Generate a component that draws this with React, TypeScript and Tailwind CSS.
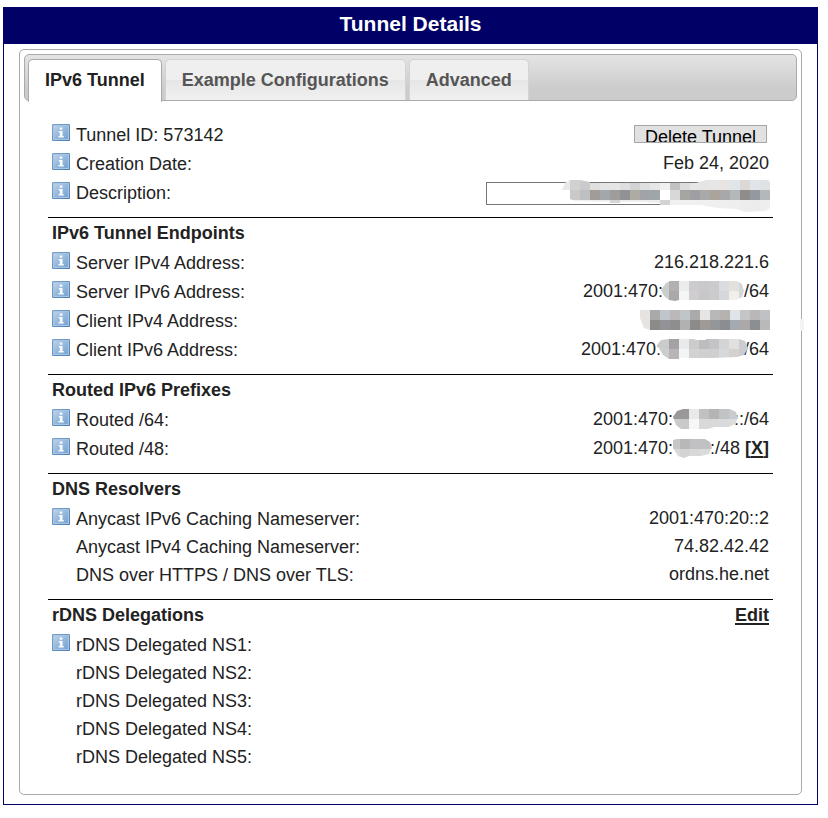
import { useId, type ReactNode } from "react";

type MosaicProps = {
  label: string;
  viewBox: string;
  outline: string;
  rows: { y: number; height: number; x: number; colors: string[] }[];
  className: string;
};

/* Pixelated patch that hides private parts of an address. */
function Mosaic({ label, viewBox, outline, rows, className }: MosaicProps) {
  const id = useId();
  return (
    <svg role="img" aria-label={label} viewBox={viewBox} shapeRendering="crispEdges" className={className}>
      <clipPath id={id}>
        <path d={outline} />
      </clipPath>
      <g clipPath={`url(#${id})`}>
        {rows.map((row) =>
          row.colors.map((color, i) => (
            <rect key={`${row.y}-${i}`} x={row.x + i * 10} y={row.y} width="10" height={row.height} fill={color} />
          )),
        )}
      </g>
    </svg>
  );
}

function InfoIcon() {
  return (
    <svg viewBox="0 0 18 17" className="mb-1 h-[17px] w-[18px] shrink-0" aria-hidden="true">
      <defs>
        <linearGradient id="info-fill" x1="0" y1="0" x2="1" y2="1">
          <stop offset="0" stopColor="#bcd2e8" />
          <stop offset="0.5" stopColor="#95b8dc" />
          <stop offset="1" stopColor="#78a3d1" />
        </linearGradient>
        <linearGradient id="info-edge" x1="0" y1="0" x2="1" y2="1">
          <stop offset="0" stopColor="#7ba5d0" />
          <stop offset="1" stopColor="#4a7db5" />
        </linearGradient>
      </defs>
      <rect width="18" height="17" rx="1" fill="url(#info-edge)" />
      <rect x="1" y="1" width="16" height="15" fill="#a9c5e2" />
      <rect x="2" y="2" width="14" height="13" fill="url(#info-fill)" />
      <path d="M7.8 3.6h2.6v2.2H7.8zM6.8 7h3.8v5h1.1v1.5H6.5V12h1.3V8.5h-1z" fill="#f6fafd" />
    </svg>
  );
}

function Row({ label, htmlFor, icon = true, children }: { label: string; htmlFor?: string; icon?: boolean; children?: ReactNode }) {
  return (
    <div className={icon ? "flex h-[29px] items-center px-1" : "flex h-7 items-center px-1 pl-7"}>
      {icon && <InfoIcon />}
      {htmlFor ? (
        <label htmlFor={htmlFor} className="ml-1.5">{label}</label>
      ) : (
        <span className={icon ? "ml-1.5" : ""}>{label}</span>
      )}
      <div className="ml-auto flex items-center pb-0.5">{children}</div>
    </div>
  );
}

function Heading({ children, action }: { children: ReactNode; action?: ReactNode }) {
  return (
    <div className="flex h-[30px] items-center justify-between px-1 font-bold">
      <h2>{children}</h2>
      {action}
    </div>
  );
}

const tabs = ["IPv6 Tunnel", "Example Configurations", "Advanced"];

export default function App() {
  return (
    <main className="pt-[7px] pr-[10px] pb-3 pl-[3px] font-['Liberation_Sans',Arial,sans-serif] text-[18px] leading-[22px] text-[#222222]">
      <div className="border border-[#000066] bg-white pb-[9px]">
        <h1 className="flex h-9 items-center justify-center bg-[#000066] pb-1 text-[21px] leading-6 font-bold text-white">
          Tunnel Details
        </h1>

        <div className="relative mx-[15px] mt-[5px] rounded-[5px] border border-[#aaaaaa] pb-[23px]">
          <span aria-hidden="true" className="absolute top-[269px] -right-[3px] h-3 w-1 rounded-sm bg-[#f3f3f3]" />
          <div
            role="tablist"
            className="mx-1 mt-1 flex h-[47px] gap-[3px] rounded-[5px] border border-[#aaaaaa] bg-linear-to-b from-[#e4e4e4] to-[#cccccc] to-75% pt-1 pl-[3px] font-bold"
          >
            {tabs.map((tab, i) => (
              <button
                key={tab}
                type="button"
                role="tab"
                aria-selected={i === 0}
                className={
                  i === 0
                    ? "-mb-0.5 rounded-t-[5px] border border-b-0 border-[#aaaaaa] bg-white px-4 pb-0.5 text-[#212121]"
                    : "rounded-t-[5px] border border-b-0 border-[#d3d3d3] bg-linear-to-b from-[#efefef] from-50% via-[#e6e6e6] via-50% to-[#f0f0f0] px-4 text-[#555555]"
                }
              >
                {tab}
              </button>
            ))}
          </div>

          <div className="px-7 pt-[19px]">
            <section className="border-b border-black pb-[10px]">
              <Row label="Tunnel ID: 573142">
                <button
                  type="button"
                  className="mr-0.5 h-[18px] w-[133px] overflow-hidden border border-[#a6a6a6] bg-[#e1e1e1] pt-0.5 leading-[18px] text-black"
                >
                  Delete Tunnel
                </button>
              </Row>
              <Row label="Creation Date:">Feb 24, 2020</Row>
              <Row label="Description:" htmlFor="description">
                <div className="relative mt-1">
                  <input id="description" type="text" className="block h-[23px] w-[283px] border border-[#767676] px-1" />
                  <Mosaic
                    label="Hidden description"
                    viewBox="562 180 209 32"
                    className="pointer-events-none absolute -top-0.5 -right-0.5 h-8 w-[209px]"
                    outline="M562 189L566 182L570 180H580L590 182V183H696L706 180L746 179L768 180L770 182V208L766 211L745 212L736 209L718 208L700 205H670V205H660V203H657L640 202H620V203H610V202L575 201L570 199V190H562Z"
                    rows={[
                      { y: 180, height: 10, x: 560, colors: ["#e9e9e9", "#d2d1cf", "#c8cacc", "#dfdfdf", "#e4e4e4", "#e5e5e5", "#dedede", "#d3d3d3", "#dfdfdf", "#e6e6e6", "#f0f0f0", "#c2c1c1", "#dcdcdc", "#e6e6e6", "#e5e5e5", "#e6e6e6", "#e8e4e1", "#e0e5ea", "#dcd8d4", "#e1e5e9", "#dfe1e3"] },
                      { y: 190, height: 10, x: 570, colors: ["#cac9c7", "#bdbfc1", "#a09d99", "#a1a7ab", "#9f9d99", "#929296", "#aeaaa4", "#a0a4a8", "#9fa6a9", "#ffffff", "#d8d8d8", "#a6a5a1", "#9d9fa2", "#a9a9a9", "#aaa49c", "#a8a8aa", "#b5b8ba", "#8e8d8b", "#94999f", "#b3b8bb"] },
                      { y: 200, height: 12, x: 570, colors: ["#f0f0f0", "#f0f0f0", "#eeeeee", "#eeeeee", "#d5d5d5", "#eeeeee", "#eeeeee", "#eeeeee", "#eeeeee", "#d3d3d3", "#f0f0f0", "#f0f0f0", "#f0f0f0", "#f0f0f0", "#efefef", "#efefef", "#eeeeee", "#ededed", "#ececec", "#eeeeee"] },
                    ]}
                  />
                </div>
              </Row>
            </section>

            <section className="border-b border-black pb-[10px]">
              <Heading>IPv6 Tunnel Endpoints</Heading>
              <Row label="Server IPv4 Address:">216.218.221.6</Row>
              <Row label="Server IPv6 Address:">
                <span>2001:470:</span>
                <Mosaic
                  label="hidden"
                  viewBox="662 280 83 20"
                  className="relative -ml-0.5 h-5 w-[83px]"
                  outline="M662 289L667 282L671 280H738L743 283L745 290L743 296L737 299H680L676 300L670 299L665 295Z"
                  rows={[
                    { y: 280, height: 10, x: 660, colors: ["#c9cdcc", "#b1b1b0", "#ebecec", "#cdcbcd", "#c9c8ca", "#cbcacc", "#dadce0", "#e4e0db", "#d3d8dc"] },
                    { y: 290, height: 10, x: 660, colors: ["#cbcecd", "#aaa8a8", "#f4f5f7", "#cfcdcf", "#c9c6ca", "#cdcacb", "#d6d7da", "#f2efe8", "#d3d8dc"] },
                  ]}
                />
                <span>/64</span>
              </Row>
              <Row label="Client IPv4 Address:">
                <Mosaic
                  label="Hidden address"
                  viewBox="640 310 130 20"
                  className="-mr-px h-5 w-[130px]"
                  outline="M640 310H770V330H650L644 328L640 318Z"
                  rows={[
                    { y: 310, height: 10, x: 640, colors: ["#e7e3e1", "#a9a9a9", "#bfc5cb", "#bab8b8", "#bfc5c9", "#aaaaaa", "#e6e5e4", "#b8b8b8", "#b4b3b0", "#dfe4e9", "#c5c5c5", "#b9b7b7", "#bec2c4"] },
                    { y: 320, height: 10, x: 640, colors: ["#e7e3e1", "#8b8a89", "#929397", "#8e8e8e", "#b0b1b3", "#8b8b8b", "#9f9a96", "#959698", "#8c8d90", "#a5a9b1", "#aca8a8", "#8a8f93", "#b9b9b9"] },
                  ]}
                />
              </Row>
              <Row label="Client IPv6 Address:">
                <span>2001:470:</span>
                <Mosaic
                  label="hidden"
                  viewBox="658 340 91 20"
                  className="relative -mr-1 -ml-1 h-5 w-[91px]"
                  outline="M658 346L662 341L670 340H694L698 341H706L708 340H740L746 342L749 349L745 356L738 358L714 359H680V360H670L664 356Z"
                  rows={[
                    { y: 340, height: 10, x: 650, colors: ["#c9cccb", "#c9cccb", "#a5a2a3", "#e9eaeb", "#cccccc", "#bdbdbf", "#c3c4c5", "#d2d4d6", "#e1e0e1", "#cacccd"] },
                    { y: 350, height: 10, x: 650, colors: ["#cccecd", "#cccecd", "#b9b4b5", "#f3f4f6", "#d2d2d2", "#cfcfcf", "#cfcfd0", "#d6d8da", "#d4d1ce", "#cacccd"] },
                  ]}
                />
                <span>/64</span>
              </Row>
            </section>

            <section className="border-b border-black pb-[10px]">
              <Heading>Routed IPv6 Prefixes</Heading>
              <Row label="Routed /64:">
                <span>2001:470:</span>
                <Mosaic
                  label="hidden"
                  viewBox="674 410 65 20"
                  className="relative -mr-1 h-5 w-[65px]"
                  outline="M674 418L678 412L684 410H731L737 413L739 419L736 425L730 428L715 428L709 430H682L677 426Z"
                  rows={[
                    { y: 410, height: 10, x: 670, colors: ["#9b989a", "#9b989a", "#e9e9e9", "#bfc1c3", "#b4b4b5", "#c0c3c4", "#c9ccce"] },
                    { y: 420, height: 10, x: 670, colors: ["#cbcbcb", "#c9c9ca", "#f7f7f7", "#d9d9d9", "#d9d9d9", "#d8dadb", "#dcdcdc"] },
                  ]}
                />
                <span>::/64</span>
              </Row>
              <Row label="Routed /48:">
                <span>2001:470:</span>
                <Mosaic
                  label="hidden"
                  viewBox="673 439 39 20"
                  className="relative -mr-0.5 h-5 w-[39px]"
                  outline="M673 441L677 440H705L710 443L712 449L709 455L701 457H689L684 459L678 457L673 449Z"
                  rows={[
                    { y: 440, height: 10, x: 670, colors: ["#c7c7c8", "#b8b8ba", "#c1c1c2", "#bfc1c4", "#c8c8c8"] },
                    { y: 450, height: 10, x: 670, colors: ["#dadada", "#d3d3d3", "#d8d8d8", "#dadbdc", "#dedede"] },
                  ]}
                />
                <span>:/48</span>
                <a href="#remove" aria-label="Remove routed /48" className="ml-[5px] font-bold">
                  [<span className="underline decoration-2 underline-offset-2">X</span>]
                </a>
              </Row>
            </section>

            <section className="border-b border-black pb-[10px]">
              <Heading>DNS Resolvers</Heading>
              <Row label="Anycast IPv6 Caching Nameserver:">2001:470:20::2</Row>
              <Row icon={false} label="Anycast IPv4 Caching Nameserver:">74.82.42.42</Row>
              <Row icon={false} label="DNS over HTTPS / DNS over TLS:">ordns.he.net</Row>
            </section>

            <section>
              <Heading
                action={
                  <a href="#edit" className="underline decoration-2 underline-offset-2">
                    Edit
                  </a>
                }
              >
                rDNS Delegations
              </Heading>
              <Row label="rDNS Delegated NS1:" />
              <Row icon={false} label="rDNS Delegated NS2:" />
              <Row icon={false} label="rDNS Delegated NS3:" />
              <Row icon={false} label="rDNS Delegated NS4:" />
              <Row icon={false} label="rDNS Delegated NS5:" />
            </section>
          </div>
        </div>
      </div>
    </main>
  );
}
